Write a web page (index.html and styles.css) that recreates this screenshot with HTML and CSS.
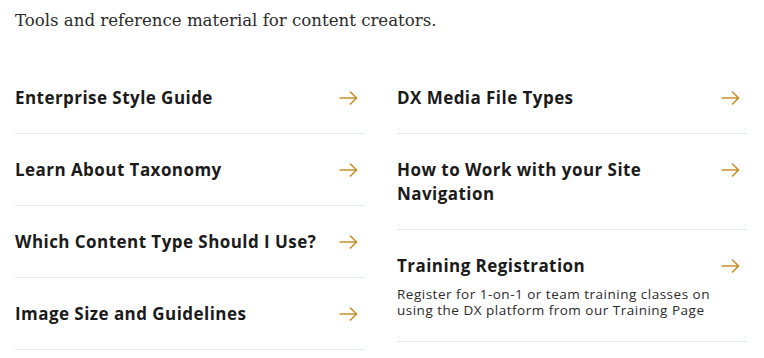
FILE: index.html
```html
<!DOCTYPE html>
<html lang="en">
<head>
<meta charset="UTF-8">
<meta name="viewport" content="width=device-width, initial-scale=1.0">
<title>Content Creator Resources</title>
<link rel="stylesheet" href="styles.css">
</head>
<body>

<div class="page">
    <p class="intro">Tools and reference material for content creators.</p>

    <div class="link-grid">
        <div class="link-column">
            <a class="link-row" href="#style-guide">
                <span class="link-text"><span class="link-title">Enterprise Style Guide</span></span>
                <svg class="arrow" viewBox="0 0 19 16"><path d="M0.5 8H17.5M11 1.5L17.5 8 11 14.5"/></svg>
            </a>
            <a class="link-row" href="#taxonomy">
                <span class="link-text"><span class="link-title">Learn About Taxonomy</span></span>
                <svg class="arrow" viewBox="0 0 19 16"><path d="M0.5 8H17.5M11 1.5L17.5 8 11 14.5"/></svg>
            </a>
            <a class="link-row" href="#content-type">
                <span class="link-text"><span class="link-title">Which Content Type Should I Use?</span></span>
                <svg class="arrow" viewBox="0 0 19 16"><path d="M0.5 8H17.5M11 1.5L17.5 8 11 14.5"/></svg>
            </a>
            <a class="link-row" href="#image-size">
                <span class="link-text"><span class="link-title">Image Size and Guidelines</span></span>
                <svg class="arrow" viewBox="0 0 19 16"><path d="M0.5 8H17.5M11 1.5L17.5 8 11 14.5"/></svg>
            </a>
        </div>

        <div class="link-column">
            <a class="link-row" href="#file-types">
                <span class="link-text"><span class="link-title">DX Media File Types</span></span>
                <svg class="arrow" viewBox="0 0 19 16"><path d="M0.5 8H17.5M11 1.5L17.5 8 11 14.5"/></svg>
            </a>
            <a class="link-row" href="#navigation">
                <span class="link-text"><span class="link-title">How to Work with your Site Navigation</span></span>
                <svg class="arrow" viewBox="0 0 19 16"><path d="M0.5 8H17.5M11 1.5L17.5 8 11 14.5"/></svg>
            </a>
            <a class="link-row" href="#training">
                <span class="link-text">
                    <span class="link-title">Training Registration</span>
                    <span class="link-desc">Register for 1-on-1 or team training classes on using the DX platform from our Training Page</span>
                </span>
                <svg class="arrow" viewBox="0 0 19 16"><path d="M0.5 8H17.5M11 1.5L17.5 8 11 14.5"/></svg>
            </a>
        </div>
    </div>
</div>

</body>
</html>
```

FILE: styles.css
```css
body {
    margin: 0;
    background-color: #fff;
    color: #1b1b1b;
    font-family: "Open Sans", Arial, sans-serif;
}

.page {
    padding: 0 17px 0 15px;
}

.intro {
    margin: 0;
    padding-top: 9px;
    height: 53px;
    font-family: "DejaVu Serif", "Liberation Serif", serif;
    font-size: 16.6px;
    line-height: 24px;
    color: #2b2b2b;
}

.link-grid {
    display: grid;
    grid-template-columns: 1fr 1fr;
    gap: 32px;
}

.link-column {
    display: flex;
    flex-direction: column;
}

.link-row {
    display: flex;
    align-items: flex-start;
    justify-content: space-between;
    gap: 3px;
    padding: 24px 7px 23px 0;
    border-bottom: 1px solid #e1e9ea;
    text-decoration: none;
    color: inherit;
}

.link-text {
    display: flex;
    flex-direction: column;
    min-width: 0;
}

.link-title {
    font-size: 17px;
    font-weight: 700;
    line-height: 24px;
    letter-spacing: 0.45px;
    color: #1b1b1b;
}

.link-desc {
    margin-top: 8px;
    font-size: 13.5px;
    line-height: 16px;
    letter-spacing: 0.5px;
    color: #2b2b2b;
}

.arrow {
    flex: none;
    width: 19px;
    height: 16px;
    margin-top: 4px;
    fill: none;
    stroke: #c8922a;
    stroke-width: 1.6;
}
```
